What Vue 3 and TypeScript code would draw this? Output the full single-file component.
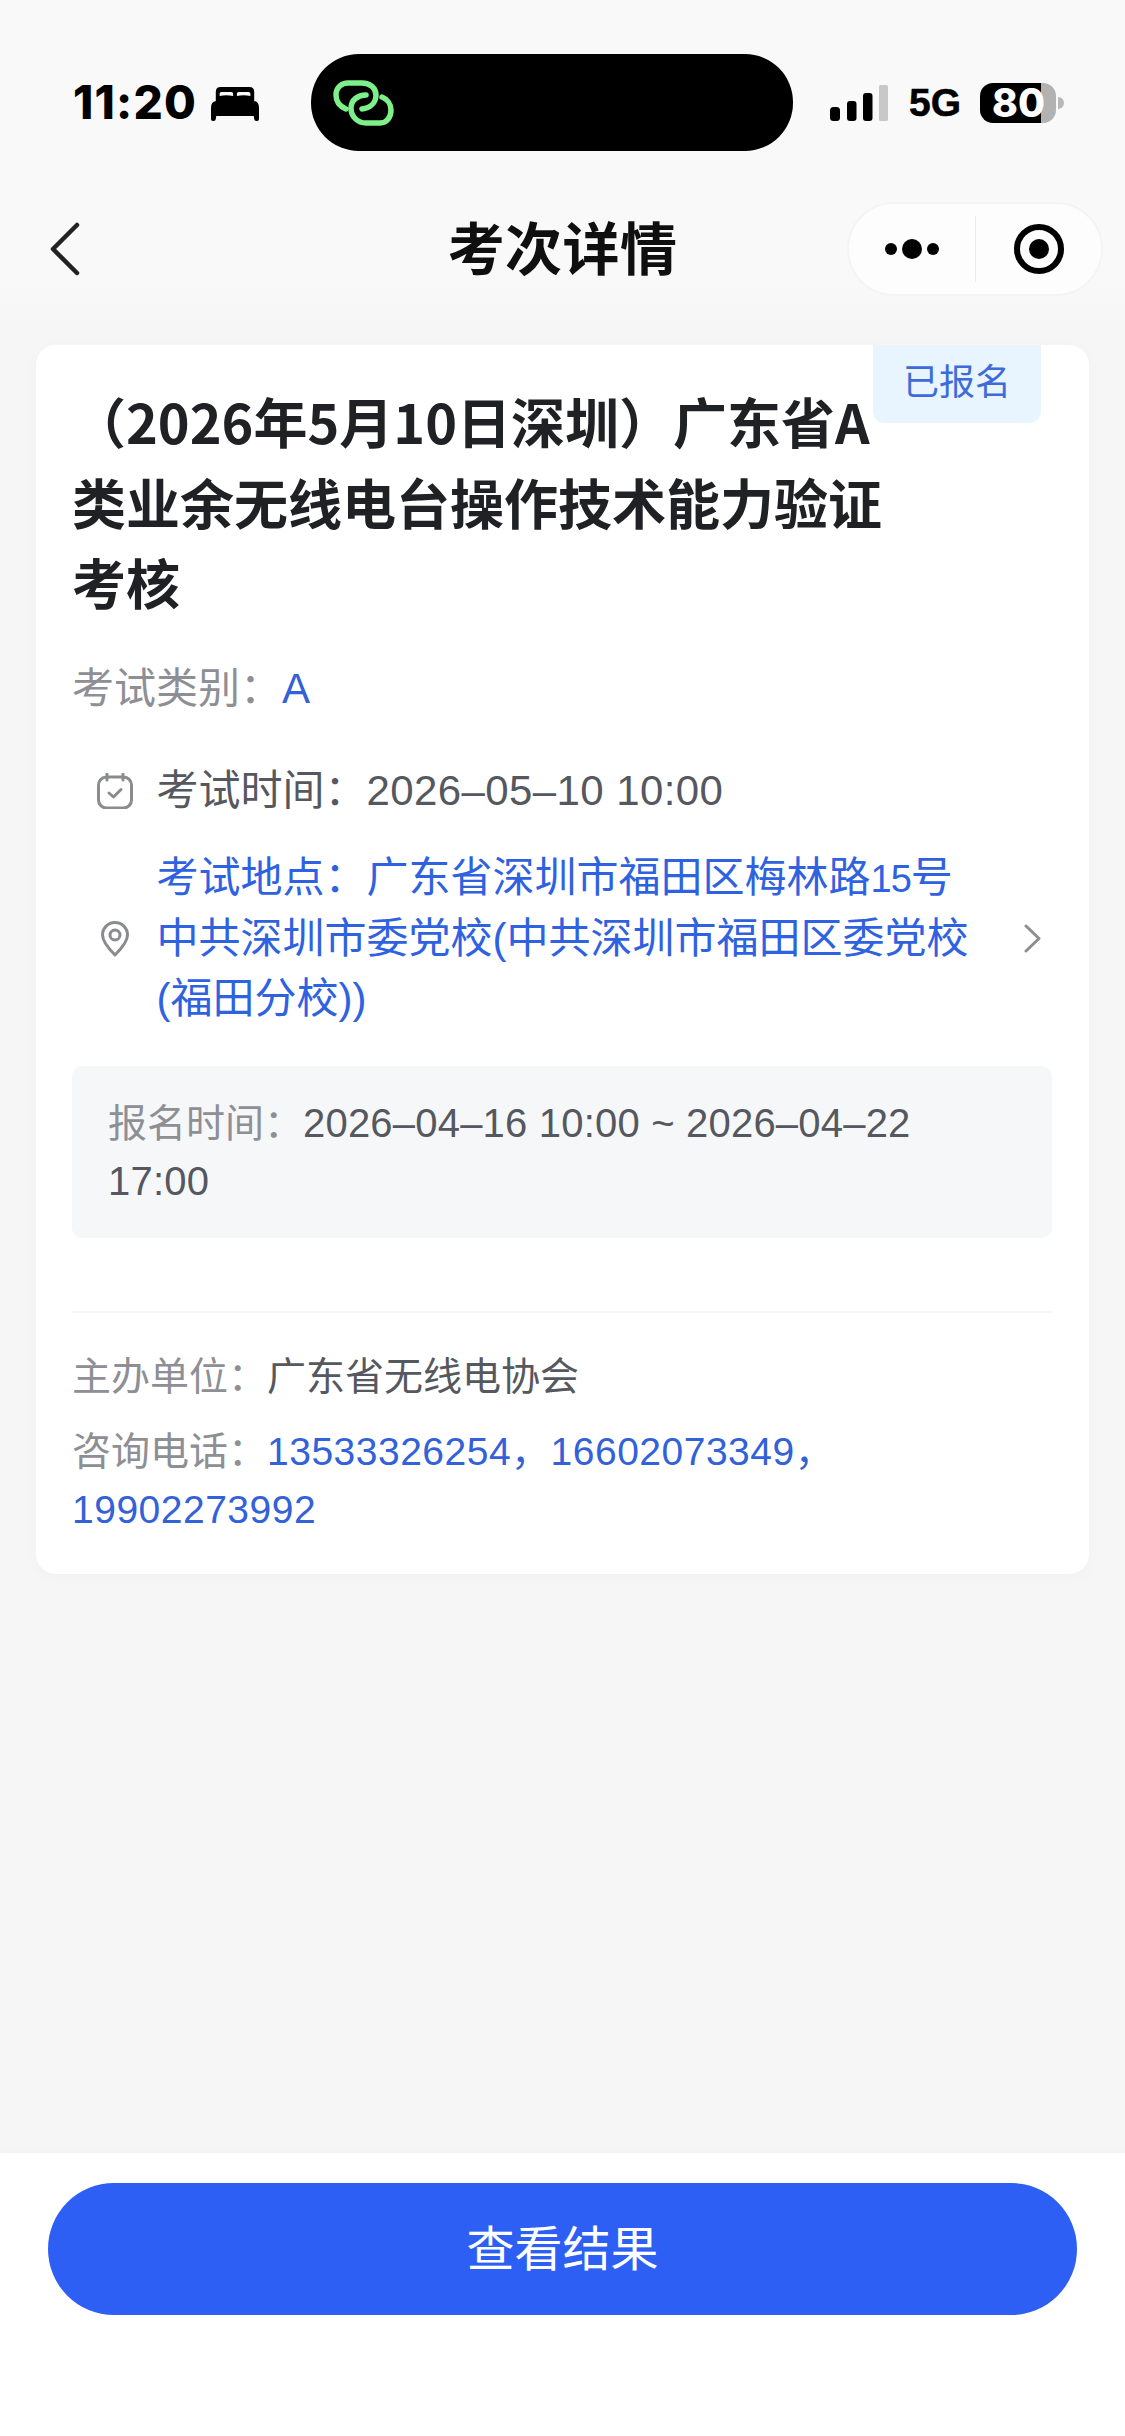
<script setup lang="ts">
const title = '（2026年5月10日深圳）广东省A类业余无线电台操作技术能力验证考核'
</script>

<template>
  <div class="page">
    <header class="top">
      <div class="status">
        <div class="status-left">
          <span class="clock">11:20</span>
          <svg class="bed" width="48" height="35" viewBox="0 0 50 35" preserveAspectRatio="none">
            <path d="M5 17V6Q5 1 10 1H40Q45 1 45 6V17Z" fill="#000" />
            <path d="M9 10V7.500Q9 6 11 6H21Q23 6 23 7.500V10Q16 8.500 9 10ZM27 10V7.500Q27 6 29 6H39Q41 6 41 7.500V10Q34 8.500 27 10Z" fill="#f9f9f9" />
            <path d="M0 22Q0 15 6 15H44Q50 15 50 22V33Q50 35 48 35H47Q45.500 35 45 33L44.500 30H5.500L5 33Q4.500 35 3 35H2Q0 35 0 33Z" fill="#000" />
          </svg>
        </div>
        <div class="island">
          <svg width="61" height="46" viewBox="0 0 61 46" fill="none" stroke="#7df08a" stroke-width="5.500" stroke-linecap="round">
            <path d="M13 29C6 26 3 21 3 15C3 7 9 3 15 3H29C37 3 43 8 43 15C43 23 37 28 29 29" />
            <path d="M33 15C25 15 18 20 18 28C18 37 25 43 33 43H47C54 43 58 37 58 30C58 24 54 19 49 17" />
          </svg>
        </div>
        <div class="status-right">
          <svg class="signal" width="58" height="36" viewBox="0 0 58 36">
            <rect x="0" y="22" width="10" height="14" rx="3.500" fill="#000" />
            <rect x="17" y="16" width="9.500" height="20" rx="3" fill="#000" />
            <rect x="33" y="8" width="9.500" height="28" rx="3" fill="#000" />
            <rect x="49" y="0" width="9" height="36" rx="1.500" fill="#c8c8c8" />
          </svg>
          <span class="net">5G</span>
          <div class="battery-wrap">
            <div class="battery"><span>80</span></div>
            <span class="nub"></span>
          </div>
        </div>
      </div>

      <nav class="nav">
        <div class="back">
          <svg width="30" height="54" viewBox="0 0 30 54" fill="none" stroke="#222" stroke-width="4.500" stroke-linecap="round" stroke-linejoin="round">
            <path d="M27 3L3 27L27 51" />
          </svg>
        </div>
        <h1 class="nav-title">考次详情</h1>
        <div class="capsule">
          <div class="cap-more">
            <i class="dot"></i><i class="dot big"></i><i class="dot"></i>
          </div>
          <span class="cap-line"></span>
          <div class="cap-close">
            <span class="target"><i></i></span>
          </div>
        </div>
      </nav>
    </header>

    <main class="content">
      <section class="card">
        <span class="badge">已报名</span>
        <h2 class="title">{{ title }}</h2>

        <p class="category"><span class="label">考试类别：</span><span class="blue">A</span></p>

        <div class="row time-row">
          <span class="row-icon">
            <svg width="36" height="36" viewBox="0 0 36 36" fill="none" stroke="#8a8b8e" stroke-width="3" stroke-linecap="round" stroke-linejoin="round">
              <rect x="1.500" y="4" width="33" height="31" rx="8" />
              <path d="M10 1V7M26 1V7" />
              <path d="M12 20L16.500 24L24 16.500" />
            </svg>
          </span>
          <span class="row-text">考试时间：<span class="num">2026–05–10 10:00</span></span>
        </div>

        <div class="row place-row">
          <span class="row-icon">
            <svg width="28" height="36" viewBox="0 0 28 36" fill="none" stroke="#8a8b8e" stroke-width="3" stroke-linejoin="round">
              <path d="M14 34C8 28 1.500 21 1.500 14A12.500 12.500 0 0 1 26.500 14C26.500 21 20 28 14 34Z" />
              <circle cx="14" cy="14" r="5" />
            </svg>
          </span>
          <span class="row-text place">考试地点：广东省深圳市福田区梅林路<span class="tight">15</span>号中共深圳市委党校(中共深圳市福田区委党校(福田分校))</span>
          <svg class="chev" width="17" height="29" viewBox="0 0 17 29" fill="none" stroke="#8f8f8f" stroke-width="3" stroke-linecap="round" stroke-linejoin="round">
            <path d="M2 2L15 14.500L2 27" />
          </svg>
        </div>

        <div class="signup">
          <span class="label signup-label">报名时间：</span><span class="signup-val">2026–04–16 10:00 ~ 2026–04–22 17:00</span>
        </div>

        <div class="rule"></div>

        <p class="info"><span class="label">主办单位：</span><span class="value">广东省无线电协会</span></p>
        <p class="info phone"><span class="label">咨询电话：</span><span class="blue digits">13533326254，16602073349，19902273992</span></p>
      </section>
    </main>

    <footer class="bottom">
      <button class="cta" type="button">查看结果</button>
    </footer>
  </div>
</template>

<style>
html, body { margin: 0; padding: 0; background: #f6f6f7; }
</style>

<style scoped>
.page {
  width: 1125px;
  height: 2436px;
  display: flex;
  flex-direction: column;
  background: #f6f6f7;
  font-family: "Liberation Sans", "Noto Sans CJK SC", sans-serif;
  overflow: hidden;
}
.top { background: linear-gradient(180deg, #f9f9f9 0, #f9f9f9 85%, #f7f7f8 100%); padding-top: 54px; height: 266px; }
.status { display: flex; align-items: center; height: 97px; padding-left: 73px; }
.status-left { display: flex; align-items: center; width: 238px; gap: 14px; }
.clock { font-family: Inter, sans-serif; font-weight: 800; font-size: 46px; line-height: 97px; color: #000; letter-spacing: 1.2px; }
.bed { margin-top: 2px; }
.island {
  width: 482px; height: 97px; background: #000; border-radius: 48px;
  display: flex; align-items: center; padding-left: 22px; box-sizing: border-box;
}
.status-right { display: flex; align-items: center; margin-left: 37px; }
.net { font-weight: 700; font-size: 39px; color: #000; margin-left: 21px; line-height: 40px; -webkit-text-stroke: 0.5px #000; }
.battery-wrap { display: flex; align-items: center; margin-left: 19px; gap: 2px; }
.battery {
  width: 76px; height: 40px; border-radius: 13px;
  background: linear-gradient(90deg, #000 0 61px, #b2b2b2 61px);
  display: flex; align-items: center; box-sizing: border-box; padding-left: 12px;
}
.battery span { font-family: Inter, sans-serif; font-weight: 800; font-size: 39px; line-height: 40px; color: #fff; }
.nub { width: 6px; height: 12px; background: #b8b8b8; border-radius: 0 6px 6px 0; }

.nav {
  display: grid; grid-template-columns: 1fr auto 1fr; align-items: center;
  height: 94px; margin-top: 51px; padding: 0 22px;
}
.back { display: flex; align-items: center; padding-left: 28px; }
.nav-title { margin: 0; padding-top: 3px; font-size: 57px; font-weight: 700; color: #0f0f0f; line-height: 91px; letter-spacing: 0.4px; }
.capsule {
  justify-self: end; width: 256px; height: 94px; border-radius: 47px; background: #fdfdfd;
  border: 2px solid #f4f4f4; box-sizing: border-box;
  display: flex; align-items: center;
}
.cap-more { width: 126px; display: flex; align-items: center; justify-content: center; gap: 5px; }
.dot { width: 12px; height: 12px; border-radius: 50%; background: #000; }
.dot.big { width: 20px; height: 20px; }
.cap-line { width: 1px; height: 66px; background: #ececec; }
.cap-close { flex: 1; display: flex; align-items: center; justify-content: center; }
.target {
  width: 50px; height: 50px; border: 6.5px solid #000; border-radius: 50%; box-sizing: border-box;
  display: flex; align-items: center; justify-content: center;
}
.target i { width: 20px; height: 20px; background: #000; border-radius: 50%; }

.content { flex: 1; padding: 25px 36px 0; }
.card {
  position: relative; background: #fff; border-radius: 20px;
  padding: 36px 37px 35px 36px;
  box-shadow: 0 3px 16px rgba(0, 0, 0, 0.025);
}
.badge {
  position: absolute; top: 0; right: 48px; width: 168px; height: 78px;
  background: #e8f4fe; border-radius: 0 0 12px 12px;
  color: #3e6bd9; font-size: 36px; line-height: 76px; text-align: center;
}
.title {
  margin: 0; width: 830px; font-family: "Noto Sans CJK SC", sans-serif;
  font-size: 54px; line-height: 80.5px; font-weight: 700; color: #202124;
}
.category { margin: 36px 0 0; font-size: 42px; line-height: 60px; }
.label { color: #8e8f94; }
.blue { color: #3361d8; }
.row { display: flex; align-items: center; font-size: 42px; line-height: 60.5px; }
.row-icon { width: 36px; margin-left: 25px; margin-right: 23.5px; display: flex; justify-content: center; flex: none; }
.time-row { margin-top: 42px; color: #55585e; }
.row-text .num { letter-spacing: 0.4px; }
.place-row { margin-top: 27px; }
.place { color: #2f62e0; width: 830px; flex: none; }
.tight { font-size: 38px; line-height: 1; letter-spacing: -1px; }
.chev { margin-left: 37.5px; flex: none; }

.signup {
  margin-top: 36px; background: #f6f7f9; border-radius: 10px;
  padding: 28px 60px 28px 36px; font-size: 40px; line-height: 58px;
}
.signup-label { font-size: 39px; line-height: 1; }
.signup-val { color: #55585e; letter-spacing: 0.2px; }
.rule { height: 2px; background: #f5f5f5; margin-top: 73px; }
.info { margin: 35px 0 0; font-size: 39px; line-height: 58px; }
.info.phone { margin-top: 17px; }
.digits { letter-spacing: 0.5px; }
.value { color: #55585e; }

.bottom {
  height: 283px; background: #fff; box-sizing: border-box; padding: 30px 48px 0;
  box-shadow: 0 -3px 10px rgba(0, 0, 0, 0.02);
}
.cta {
  display: block; width: 100%; height: 132px; border: 0; border-radius: 66px;
  background: #2d5ff5; color: #fff; font-family: inherit; font-size: 48px; font-weight: 400; padding: 0 0 9px;
}
</style>
